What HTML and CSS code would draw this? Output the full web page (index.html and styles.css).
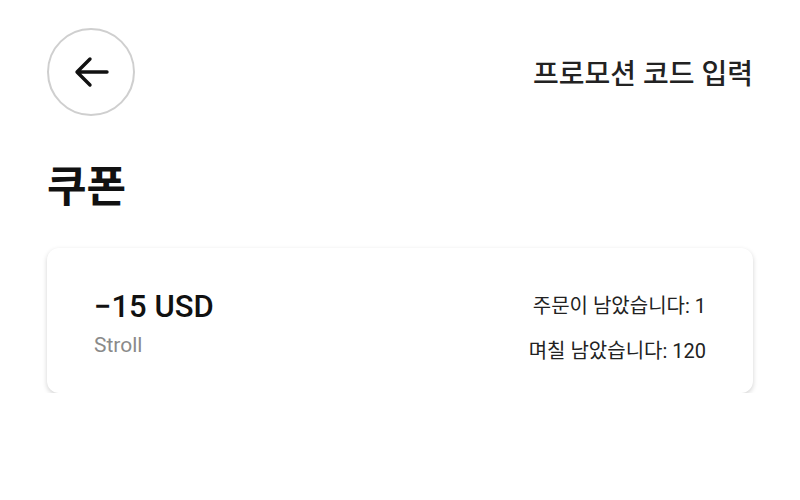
FILE: index.html
```html
<!DOCTYPE html>
<html lang="ko">
  <head>
    <meta charset="UTF-8" />
    <meta name="viewport" content="width=device-width, initial-scale=1.0" />
    <title>쿠폰</title>
    <link rel="stylesheet" href="styles.css">
  </head>

  <body>
    <div class="page">
      <div class="top-bar">
        <button class="back-button" aria-label="뒤로">
          <svg width="44" height="44" viewBox="0 0 44 44">
            <path d="M38 22H9M21 9L8 22l13 13" fill="none" stroke="#111" stroke-width="3.4" stroke-linecap="round" stroke-linejoin="round" />
          </svg>
        </button>
        <a class="promo-link" href="#">프로모션 코드 입력</a>
      </div>

      <h1 class="title">쿠폰</h1>

      <div class="coupon-card">
        <div class="coupon-left">
          <div class="amount">&minus;15 USD</div>
          <div class="merchant">Stroll</div>
        </div>
        <div class="coupon-right">
          <div>주문이 남았습니다: 1</div>
          <div>며칠 남았습니다: 120</div>
        </div>
      </div>
    </div>
  </body>
</html>
```

FILE: styles.css
```css
body {
  margin: 0;
  background: #ffffff;
  font-family: Roboto, "Noto Sans CJK KR", sans-serif;
  color: #111;
}

.page {
  padding: 28px 47px 0;
}

.top-bar {
  display: flex;
  justify-content: space-between;
  align-items: center;
}

.back-button {
  width: 88px;
  height: 88px;
  border-radius: 50%;
  border: 2px solid #cfcfcf;
  background: #fff;
  display: flex;
  align-items: center;
  justify-content: center;
  padding: 0;
}

.promo-link {
  font-size: 28px;
  font-weight: 500;
  color: #222;
  text-decoration: none;
}

.title {
  font-size: 43px;
  font-weight: 700;
  margin: 46px 0 34px;
  line-height: 1.2;
}

.coupon-card {
  display: flex;
  justify-content: space-between;
  align-items: center;
  height: 145px;
  box-sizing: border-box;
  padding: 4px 47px 0 47px;
  border-radius: 12px;
  background: #fff;
  box-shadow: 0 2px 5px rgba(0, 0, 0, 0.18);
}

.amount {
  font-size: 31px;
  font-weight: 500;
  color: #111;
}

.merchant {
  margin-top: 8px;
  font-size: 21px;
  color: #8a8a8a;
}

.coupon-right {
  display: flex;
  flex-direction: column;
  align-items: flex-end;
  gap: 16px;
  font-size: 20px;
  color: #222;
  padding-top: 10px;
}
```
